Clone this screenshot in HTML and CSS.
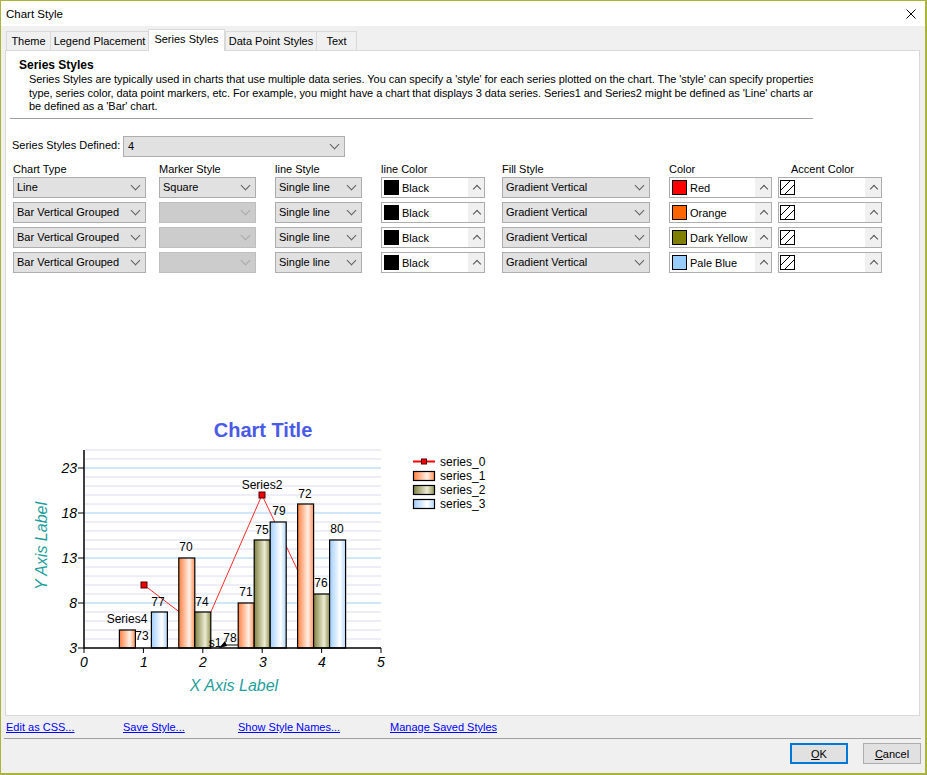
FILE: index.html
```html
<!DOCTYPE html>
<html lang="en">
<head>
    <meta charset="UTF-8">
    <title>Chart Style</title>
    <link rel="stylesheet" href="styles.css">
</head>
<body>
    <div class="window">
        <div class="titlebar">
            <span>Chart Style</span>
            <svg class="close" width="10" height="10" viewBox="0 0 10 10">
                <path d="M0.5 0.5L9.5 9.5M9.5 0.5L0.5 9.5" stroke="#000" stroke-width="1"/>
            </svg>
        </div>

        <div class="tabs">
            <div class="tab t1">Theme</div>
            <div class="tab t2">Legend Placement</div>
            <div class="tab t3 active">Series Styles</div>
            <div class="tab t4">Data Point Styles</div>
            <div class="tab t5 last">Text</div>
        </div>

        <div class="panel">
            <div class="head">Series Styles</div>
            <div class="desc">Series Styles are typically used in charts that use multiple data series. You can specify a 'style' for each series plotted on the chart. The 'style' can specify properties, such as chart
type, series color, data point markers, etc. For example, you might have a chart that displays 3 data series. Series1 and Series2 might be defined as 'Line' charts and Series3 might
be defined as a 'Bar' chart.</div>
            <div class="rule"></div>

            <div class="defined">
                <span class="dlabel">Series Styles Defined:</span>
                <div class="combo wide">4</div>
            </div>

            <div class="grid">
                <div class="lbl">Chart Type</div>
                <div class="lbl">Marker Style</div>
                <div class="lbl">line Style</div>
                <div class="lbl">line Color</div>
                <div class="lbl">Fill Style</div>
                <div class="lbl">Color</div>
                <div class="lbl accent-lbl">Accent Color</div>

                <!-- row 1 -->
                <div class="combo w1">Line</div>
                <div class="combo w2">Square</div>
                <div class="combo w3">Single line</div>
                <div class="cbox w4"><span class="sw sw-black"></span>Black<span class="up"></span></div>
                <div class="combo w5">Gradient Vertical</div>
                <div class="cbox w6"><span class="sw sw-red"></span>Red<span class="up"></span></div>
                <div class="cbox w7"><svg class="hatch" width="15" height="15" viewBox="0 0 15 15"><rect x="0.5" y="0.5" width="14" height="14" fill="#fff" stroke="#000"/><path d="M1 10L10 1M5 14L14 5" stroke="#000"/></svg><span class="up"></span></div>

                <!-- row 2 -->
                <div class="combo w1">Bar Vertical Grouped</div>
                <div class="combo w2 off"></div>
                <div class="combo w3">Single line</div>
                <div class="cbox w4"><span class="sw sw-black"></span>Black<span class="up"></span></div>
                <div class="combo w5">Gradient Vertical</div>
                <div class="cbox w6"><span class="sw sw-orange"></span>Orange<span class="up"></span></div>
                <div class="cbox w7"><svg class="hatch" width="15" height="15" viewBox="0 0 15 15"><rect x="0.5" y="0.5" width="14" height="14" fill="#fff" stroke="#000"/><path d="M1 10L10 1M5 14L14 5" stroke="#000"/></svg><span class="up"></span></div>

                <!-- row 3 -->
                <div class="combo w1">Bar Vertical Grouped</div>
                <div class="combo w2 off"></div>
                <div class="combo w3">Single line</div>
                <div class="cbox w4"><span class="sw sw-black"></span>Black<span class="up"></span></div>
                <div class="combo w5">Gradient Vertical</div>
                <div class="cbox w6"><span class="sw sw-olive"></span>Dark Yellow<span class="up"></span></div>
                <div class="cbox w7"><svg class="hatch" width="15" height="15" viewBox="0 0 15 15"><rect x="0.5" y="0.5" width="14" height="14" fill="#fff" stroke="#000"/><path d="M1 10L10 1M5 14L14 5" stroke="#000"/></svg><span class="up"></span></div>

                <!-- row 4 -->
                <div class="combo w1">Bar Vertical Grouped</div>
                <div class="combo w2 off"></div>
                <div class="combo w3">Single line</div>
                <div class="cbox w4"><span class="sw sw-black"></span>Black<span class="up"></span></div>
                <div class="combo w5">Gradient Vertical</div>
                <div class="cbox w6"><span class="sw sw-pale"></span>Pale Blue<span class="up"></span></div>
                <div class="cbox w7"><svg class="hatch" width="15" height="15" viewBox="0 0 15 15"><rect x="0.5" y="0.5" width="14" height="14" fill="#fff" stroke="#000"/><path d="M1 10L10 1M5 14L14 5" stroke="#000"/></svg><span class="up"></span></div>
            </div>

            <!-- preview chart, drawn in page coordinates -->
            <svg class="chart" width="480" height="300" viewBox="20 410 480 300">
                <defs>
                    <linearGradient id="gOrange" x1="0" y1="0" x2="1" y2="0">
                        <stop offset="0" stop-color="#ff8040"/>
                        <stop offset="0.65" stop-color="#fff0e6"/>
                        <stop offset="1" stop-color="#ff9058"/>
                    </linearGradient>
                    <linearGradient id="gOlive" x1="0" y1="0" x2="1" y2="0">
                        <stop offset="0" stop-color="#808040"/>
                        <stop offset="0.65" stop-color="#ececd4"/>
                        <stop offset="1" stop-color="#909050"/>
                    </linearGradient>
                    <linearGradient id="gBlue" x1="0" y1="0" x2="1" y2="0">
                        <stop offset="0" stop-color="#a0ceff"/>
                        <stop offset="0.65" stop-color="#ffffff"/>
                        <stop offset="1" stop-color="#b0d8ff"/>
                    </linearGradient>
                </defs>

                <text class="ctitle" x="263" y="437">Chart Title</text>

                <!-- grid -->
                <path class="minor" d="M85 639H381M85 630H381M85 621H381M85 612H381M85 594H381M85 585H381M85 576H381M85 567H381M85 549H381M85 540H381M85 531H381M85 522H381M85 504H381M85 495H381M85 486H381M85 477H381M85 459H381M85 450H381"/>
                <path class="major" d="M85 603H381M85 558H381M85 513H381M85 468H381"/>

                <!-- series_0 line (behind bars) -->
                <polyline points="144,585 203,630 262,495 321.6,621" fill="none" stroke="#ff2a2a" stroke-width="1"/>
                <rect class="mark" x="141" y="582" width="6" height="6"/>
                <rect class="mark" x="259" y="492" width="6" height="6"/>

                <!-- bars -->
                <g class="bars">
                    <rect x="119.4" y="630" width="16" height="18" fill="url(#gOrange)"/>
                    <rect x="151.4" y="612" width="16" height="36" fill="url(#gBlue)"/>

                    <rect x="178.8" y="558" width="16" height="90" fill="url(#gOrange)"/>
                    <rect x="194.8" y="612" width="16" height="36" fill="url(#gOlive)"/>

                    <rect x="238.2" y="603" width="16" height="45" fill="url(#gOrange)"/>
                    <rect x="254.2" y="540" width="16" height="108" fill="url(#gOlive)"/>
                    <rect x="270.2" y="522" width="16" height="126" fill="url(#gBlue)"/>

                    <rect x="297.6" y="504" width="16" height="144" fill="url(#gOrange)"/>
                    <rect x="313.6" y="594" width="16" height="54" fill="url(#gOlive)"/>
                    <rect x="329.6" y="540" width="16" height="108" fill="url(#gBlue)"/>
                </g>

                <!-- data labels -->
                <g class="dlab">
                    <text x="127" y="623">Series4</text>
                    <text x="142" y="640">73</text>
                    <text x="158" y="606">77</text>
                    <text x="186" y="551">70</text>
                    <text x="202" y="606">74</text>
                    <text x="215" y="647">s1</text>
                    <text x="230" y="642">78</text>
                    <text x="246" y="596">71</text>
                    <text x="262" y="534">75</text>
                    <text x="279" y="515">79</text>
                    <text x="262" y="489">Series2</text>
                    <text x="305" y="498">72</text>
                    <text x="321" y="587">76</text>
                    <text x="337" y="533">80</text>
                </g>
                <path d="M238 645H224" stroke="#000" stroke-width="1"/>
                <polygon points="219,648 225,641 227,646" fill="#000"/>

                <!-- axes -->
                <path class="axis" d="M84 450V648H381"/>
                <path class="axis thin" d="M78 468H84M78 513H84M78 558H84M78 603H84M78 648H84M84 648V653M143.4 648V653M202.8 648V653M262.2 648V653M321.6 648V653M381 648V653"/>

                <g class="ytick">
                    <text x="77" y="473">23</text>
                    <text x="77" y="518">18</text>
                    <text x="77" y="563">13</text>
                    <text x="77" y="608">8</text>
                    <text x="77" y="653">3</text>
                </g>
                <g class="xtick">
                    <text x="84" y="667">0</text>
                    <text x="144" y="667">1</text>
                    <text x="203" y="667">2</text>
                    <text x="263" y="667">3</text>
                    <text x="322" y="667">4</text>
                    <text x="381" y="667">5</text>
                </g>

                <text class="alabel" x="234" y="691">X Axis Label</text>
                <text class="alabel" transform="translate(47 546) rotate(-90)">Y Axis Label</text>

                <!-- legend -->
                <path d="M413 461.5H435" stroke="#ff0000" stroke-width="2"/>
                <rect class="mark" x="421.5" y="459" width="5" height="5"/>
                <g class="bars">
                    <rect x="413.5" y="471.5" width="21" height="9" fill="url(#gOrange)"/>
                    <rect x="413.5" y="485.5" width="21" height="9" fill="url(#gOlive)"/>
                    <rect x="413.5" y="499.5" width="21" height="9" fill="url(#gBlue)"/>
                </g>
                <g class="legend">
                    <text x="440" y="466">series_0</text>
                    <text x="440" y="480">series_1</text>
                    <text x="440" y="494">series_2</text>
                    <text x="440" y="508">series_3</text>
                </g>
            </svg>
        </div>

        <div class="links">
            <a href="#">Edit as CSS...</a>
            <a href="#">Save Style...</a>
            <a href="#">Show Style Names...</a>
            <a href="#">Manage Saved Styles</a>
        </div>
        <div class="sep"></div>
        <div class="buttons">
            <div class="btn default"><span><u>O</u>K</span></div>
            <div class="btn"><span><u>C</u>ancel</span></div>
        </div>
    </div>
</body>
</html>
```

FILE: styles.css
```css
* {
    box-sizing: border-box;
}
body {
    margin: 0;
    font-family: "Liberation Sans", Arial, sans-serif;
    font-size: 11px;
    color: #000;
    background: #f0f0f0;
}
.window {
    width: 927px;
    height: 775px;
    border: solid #aab43a;
    border-width: 1px 2px 2px 1px;
    display: flex;
    flex-direction: column;
    background: #f0f0f0;
}
.titlebar {
    height: 25px;
    flex: none;
    background: #fff;
    display: flex;
    align-items: center;
    justify-content: space-between;
    padding: 0 9px 0 5px;
    font-size: 11.5px;
}
.close {
    display: block;
}

/* tabs */
.tabs {
    height: 24px;
    flex: none;
    display: flex;
    align-items: flex-end;
    padding-left: 5px;
}
.tab {
    height: 19px;
    line-height: 19px;
    text-align: center;
    background: #f0f0f0;
    border: 1px solid #d9d9d9;
    border-width: 1px 0 0 1px;
}
.tab.last {
    border-right-width: 1px;
}
.tab.active {
    height: 22px;
    line-height: 19px;
    margin-bottom: -1px;
    background: #fff;
    border-width: 1px 1px 0 1px;
    position: relative;
    z-index: 1;
}
.t1 { width: 44px; }
.t2 { width: 98px; }
.t3 { width: 77px; }
.t4 { width: 91px; }
.t5 { width: 41px; }

/* tab page */
.panel {
    height: 666px;
    flex: none;
    margin: 0 5px 0 4px;
    background: #fff;
    border: 1px solid #d9d9d9;
    display: flex;
    flex-direction: column;
}
.head {
    margin: 7px 0 0 13px;
    font-weight: bold;
    font-size: 12px;
    line-height: 14px;
}
.desc {
    margin: 1px 0 0 23px;
    width: 784px;
    height: 41px;
    line-height: 13.5px;
    letter-spacing: -0.06px;
    white-space: pre;
    overflow: hidden;
}
.rule {
    margin: 4px 0 0 4px;
    width: 803px;
    height: 1px;
    flex: none;
    background: #a0a0a0;
}
.defined {
    display: flex;
    align-items: center;
    margin: 17px 0 0 6px;
}
.dlabel {
    width: 111px;
    margin-top: -3px;
}

/* combo boxes */
.combo {
    position: relative;
    height: 21px;
    line-height: 19px;
    padding-left: 3px;
    background: #e1e1e1;
    border: 1px solid #adadad;
    white-space: nowrap;
}
.combo::after {
    content: "";
    position: absolute;
    right: 6px;
    top: 4px;
    width: 6px;
    height: 6px;
    border-right: 1px solid #606060;
    border-bottom: 1px solid #606060;
    transform: rotate(45deg);
}
.combo.wide {
    width: 222px;
    padding-left: 4px;
}
.combo.off {
    background: #cccccc;
    border-color: #bfbfbf;
}
.combo.off::after {
    border-color: #a8a8a8;
}

.grid {
    margin: 5px 0 0 7px;
    display: grid;
    grid-template-columns: 146px 116px 106px 121px 167px 109px 104px;
    grid-template-rows: 11px repeat(4, 21px);
    row-gap: 4px;
}
.lbl {
    line-height: 14px;
    white-space: nowrap;
}
.accent-lbl {
    padding-left: 13px;
}
.w1 { width: 133px; }
.w2 { width: 97px; }
.w3 { width: 87px; }
.w4 { width: 104px; }
.w5 { width: 148px; }
.w6 { width: 103px; }
.w7 { width: 104px; }

/* colour pickers */
.cbox {
    height: 21px;
    display: flex;
    align-items: center;
    background: #fff;
    border: 1px solid #adadad;
    white-space: nowrap;
}
.sw {
    width: 15px;
    height: 15px;
    flex: none;
    margin: 0 3px 0 2px;
    border: 1px solid #000;
}
.sw-black { background: #000; }
.sw-red { background: #ff0000; }
.sw-orange { background: #ff6600; }
.sw-olive { background: #808000; }
.sw-pale { background: #99ccff; }
.hatch {
    display: block;
    margin-left: 1px;
}
.up {
    position: relative;
    margin-left: auto;
    width: 16px;
    align-self: stretch;
    background: #f0f0f0;
}
.up::after {
    content: "";
    position: absolute;
    left: 6px;
    top: 8px;
    width: 5px;
    height: 5px;
    border-left: 1px solid #505050;
    border-top: 1px solid #505050;
    transform: rotate(45deg);
}

/* chart */
.chart {
    display: block;
    margin: auto 0 5px 14px;
    font-family: "Liberation Sans", Arial, sans-serif;
}
.ctitle {
    font-size: 20px;
    font-weight: bold;
    fill: #4a5ae8;
    text-anchor: middle;
}
.minor {
    stroke: #dcdcf0;
    stroke-width: 1;
}
.major {
    stroke: #9fcff0;
    stroke-width: 1;
}
.mark {
    fill: #ee0000;
    stroke: #550000;
    stroke-width: 1;
}
.bars rect {
    stroke: #000;
    stroke-width: 1.2;
}
.dlab text {
    font-size: 12px;
    text-anchor: middle;
    fill: #000;
}
.axis {
    fill: none;
    stroke: #000;
    stroke-width: 1.5;
}
.axis.thin {
    stroke-width: 1;
}
.ytick text,
.xtick text {
    font-size: 14px;
    font-style: italic;
    fill: #000;
}
.ytick text {
    text-anchor: end;
}
.xtick text {
    text-anchor: middle;
}
.alabel {
    font-size: 16px;
    font-style: italic;
    fill: #1f9e9e;
    text-anchor: middle;
}
.legend text {
    font-size: 12px;
    fill: #000;
}

/* footer */
.links {
    height: 22px;
    flex: none;
    display: grid;
    grid-template-columns: 117px 115px 152px auto;
    align-items: center;
    padding-left: 5px;
}
.links a {
    color: #0000ff;
    text-decoration: underline;
    justify-self: start;
}
.sep {
    height: 1px;
    flex: none;
    margin: 0 4px 0 3px;
    background: #a0a0a0;
}
.buttons {
    display: flex;
    justify-content: flex-end;
    gap: 15px;
    padding: 4px 4px 0 0;
}
.btn {
    width: 58px;
    height: 21px;
    display: flex;
    align-items: center;
    justify-content: center;
    background: #e1e1e1;
    border: 1px solid #adadad;
}
.btn.default {
    border: 2px solid #0078d7;
}
```
